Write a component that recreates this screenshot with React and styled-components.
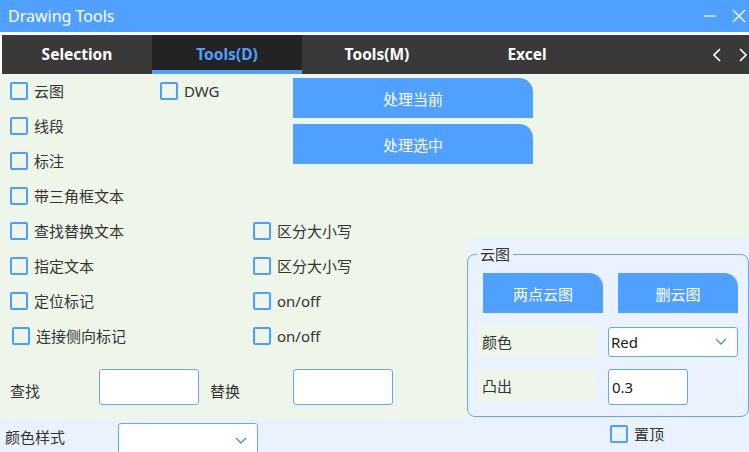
import styled, { createGlobalStyle } from "styled-components";

const GlobalStyle = createGlobalStyle`
  html, body {
    margin: 0;
    padding: 0;
    background: #fff;
  }
  body {
    font-family: "Noto Sans", "Noto Sans CJK SC", sans-serif;
    color: #333;
  }
  * { box-sizing: border-box; }
`;

const Window = styled.div`
  width: 749px;
  height: 452px;
  display: flex;
  flex-direction: column;
  overflow: hidden;
  background: #fff;
`;

const TitleBar = styled.div`
  height: 32px;
  flex: none;
  background: #50a0ff;
  display: flex;
  align-items: center;
  padding-left: 8px;
  color: #fff;
  font-size: 16px;
`;

const WinButtons = styled.div`
  margin-left: auto;
  display: flex;
  align-items: center;
  gap: 15px;
  padding-right: 3px;
`;

const TabBar = styled.div`
  height: 39px;
  flex: none;
  margin: 3px 0 0 2px;
  background: #393939;
  display: flex;
`;

const Tab = styled.div`
  width: 150px;
  display: flex;
  align-items: center;
  justify-content: center;
  padding-bottom: 2px;
  font-weight: bold;
  font-size: 15.5px;
  color: ${(p) => (p.$active ? "#50a0ff" : "#fff")};
  background: ${(p) => (p.$active ? "#232323" : "transparent")};
  box-shadow: ${(p) => (p.$active ? "inset 0 -4px 0 #50a0ff" : "none")};
`;

const TabNav = styled.div`
  margin-left: auto;
  display: flex;
  align-items: center;
  gap: 18px;
  padding-right: 2px;
`;

const Main = styled.div`
  flex: 1;
  display: grid;
  grid-template-columns: 467px 1fr;
  grid-template-rows: 344px 1fr;
  background: #eef6e9;
`;

const Form = styled.div`
  grid-column: 1;
  grid-row: 1;
  padding-left: 10px;
  font-size: 15px;
`;

const TopBlock = styled.div`
  display: flex;
`;

const CheckColumn = styled.div`
  width: 283px;
  flex: none;
`;

const ButtonStack = styled.div`
  display: flex;
  flex-direction: column;
  gap: 6px;
  margin-top: 4px;
`;

const BlueButton = styled.button`
  width: ${(p) => p.$w || 120}px;
  height: 40px;
  flex: none;
  border: 0;
  border-radius: 0 14px 0 0;
  background: #50a0ff;
  color: #fff;
  font-family: "Noto Sans CJK SC", sans-serif;
  font-size: 15px;
  padding: 0;
`;

const CheckRow = styled.div`
  height: 35px;
  display: flex;
  align-items: flex-start;
  padding-top: 8px;
`;

const CheckItem = styled.label`
  display: flex;
  align-items: center;
  gap: 6px;
  width: ${(p) => (p.$w ? `${p.$w}px` : "auto")};
  margin-left: ${(p) => p.$shift || 0}px;
  line-height: 18px;
  white-space: nowrap;
`;

const Box = styled.span`
  width: 18px;
  height: 18px;
  flex: none;
  border: 2px solid #4c9ffe;
  border-radius: 2px;
`;

const FindRow = styled.div`
  display: flex;
  align-items: flex-start;
  margin-top: 15px;
`;

const FieldLabel = styled.span`
  width: ${(p) => p.$w}px;
  flex: none;
  line-height: ${(p) => p.$lh || 36}px;
  padding-top: ${(p) => (p.$pt === undefined ? 4 : p.$pt)}px;
  margin-left: ${(p) => p.$ml || 0}px;
`;

const TextBox = styled.div`
  width: ${(p) => p.$w}px;
  height: 36px;
  flex: none;
  background: #fff;
  border: 1px solid #6aa6ee;
  border-radius: 3px;
  display: flex;
  align-items: center;
  padding-left: 3px;
  font-size: 15px;
  color: #222;
`;

const Combo = styled.div`
  width: ${(p) => p.$w}px;
  height: ${(p) => p.$h || 30}px;
  flex: none;
  margin-top: ${(p) => p.$mt || 0}px;
  background: #fff;
  border: 1px solid #6aa6ee;
  border-radius: 3px;
  display: flex;
  align-items: center;
  padding: 0 10px 0 2px;
  font-size: 15px;
  color: #222;
  & > svg {
    margin-left: auto;
  }
`;

const BottomStrip = styled.div`
  grid-column: 1;
  grid-row: 2;
  background: #eaf2fd;
  display: flex;
  align-items: flex-start;
  padding: 5px 0 0 5px;
  font-size: 15px;
`;

const Side = styled.div`
  grid-column: 2;
  grid-row: 1 / span 2;
  display: flex;
  flex-direction: column;
  padding-top: 163px;
`;

const Panel = styled.div`
  flex: 1;
  background: #eaf2fd;
  padding-top: 7px;
  font-size: 15px;
`;

const Group = styled.fieldset`
  margin: 0;
  padding: 0 0 11px 0;
  border: 1px solid #6aa6ee;
  border-radius: 8px;
  width: 282px;
`;

const Legend = styled.legend`
  margin-left: 9px;
  padding: 0 3px;
  line-height: 20px;
  font-size: 15px;
`;

const GroupButtons = styled.div`
  display: flex;
  gap: 15px;
  padding-left: 15px;
  margin-top: 9px;
`;

const ParamRow = styled.div`
  display: flex;
  align-items: flex-start;
  gap: 13px;
  padding-left: 10px;
  margin-top: 12px;
`;

const ParamLabel = styled.div`
  width: 117px;
  height: 32px;
  flex: none;
  background: #eef6e9;
  display: flex;
  align-items: center;
  padding-left: 4px;
`;

const PinRow = styled.div`
  padding: 8px 0 0 143px;
`;

const Chevron = ({ size = 12 }) => (
  <svg width={size} height={size * 0.6} viewBox="0 0 12 7">
    <polyline points="1,1 6,6 11,1" fill="none" stroke="#4a90e2" strokeWidth="1.4" />
  </svg>
);

const Check = ({ children, w, shift }) => (
  <CheckItem $w={w} $shift={shift}>
    <Box />
    <span>{children}</span>
  </CheckItem>
);

export default function App() {
  return (
    <>
      <GlobalStyle />
      <Window>
        <TitleBar>
          Drawing Tools
          <WinButtons>
            <svg width="14" height="14" viewBox="0 0 14 14">
              <line x1="1" y1="7" x2="13" y2="7" stroke="#fff" strokeWidth="1.2" />
            </svg>
            <svg width="14" height="14" viewBox="0 0 14 14">
              <line x1="1" y1="1" x2="13" y2="13" stroke="#fff" strokeWidth="1.2" />
              <line x1="13" y1="1" x2="1" y2="13" stroke="#fff" strokeWidth="1.2" />
            </svg>
          </WinButtons>
        </TitleBar>

        <TabBar>
          <Tab>Selection</Tab>
          <Tab $active>Tools(D)</Tab>
          <Tab>Tools(M)</Tab>
          <Tab>Excel</Tab>
          <TabNav>
            <svg width="8" height="14" viewBox="0 0 8 14">
              <polyline points="7,1 1,7 7,13" fill="none" stroke="#fff" strokeWidth="1.6" />
            </svg>
            <svg width="8" height="14" viewBox="0 0 8 14">
              <polyline points="1,1 7,7 1,13" fill="none" stroke="#fff" strokeWidth="1.6" />
            </svg>
          </TabNav>
        </TabBar>

        <Main>
          <Form>
            <TopBlock>
              <CheckColumn>
                <CheckRow>
                  <Check w={150}>云图</Check>
                  <Check>DWG</Check>
                </CheckRow>
                <CheckRow>
                  <Check>线段</Check>
                </CheckRow>
                <CheckRow>
                  <Check>标注</Check>
                </CheckRow>
                <CheckRow>
                  <Check>带三角框文本</Check>
                </CheckRow>
              </CheckColumn>
              <ButtonStack>
                <BlueButton $w={240}>处理当前</BlueButton>
                <BlueButton $w={240}>处理选中</BlueButton>
              </ButtonStack>
            </TopBlock>
            <CheckRow>
              <Check w={243}>查找替换文本</Check>
              <Check>区分大小写</Check>
            </CheckRow>
            <CheckRow>
              <Check w={243}>指定文本</Check>
              <Check>区分大小写</Check>
            </CheckRow>
            <CheckRow>
              <Check w={243}>定位标记</Check>
              <Check>on/off</Check>
            </CheckRow>
            <CheckRow>
              <Check w={241} shift={2}>连接侧向标记</Check>
              <Check>on/off</Check>
            </CheckRow>
            <FindRow>
              <FieldLabel $w={89}>查找</FieldLabel>
              <TextBox $w={100} />
              <FieldLabel $w={83} $ml={11}>替换</FieldLabel>
              <TextBox $w={100} />
            </FindRow>
          </Form>

          <BottomStrip>
            <FieldLabel $w={113} $pt={0} $lh={28}>颜色样式</FieldLabel>
            <Combo $w={140} $h={36}>
              <Chevron />
            </Combo>
          </BottomStrip>

          <Side>
            <Panel>
              <Group>
                <Legend>云图</Legend>
                <GroupButtons>
                  <BlueButton>两点云图</BlueButton>
                  <BlueButton>删云图</BlueButton>
                </GroupButtons>
                <ParamRow>
                  <ParamLabel>颜色</ParamLabel>
                  <Combo $w={130} $mt={2}>
                    Red
                    <Chevron />
                  </Combo>
                </ParamRow>
                <ParamRow>
                  <ParamLabel>凸出</ParamLabel>
                  <TextBox $w={80}>0.3</TextBox>
                </ParamRow>
              </Group>
              <PinRow>
                <Check>置顶</Check>
              </PinRow>
            </Panel>
          </Side>
        </Main>
      </Window>
    </>
  );
}
